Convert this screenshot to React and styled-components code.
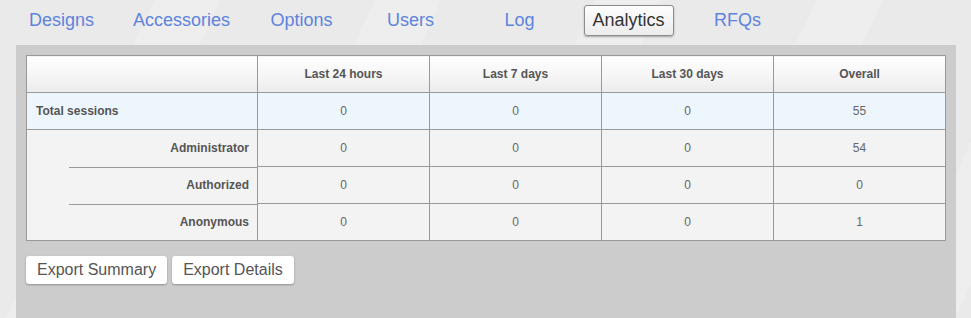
import React from "react";
import styled, { createGlobalStyle } from "styled-components";

const GlobalStyle = createGlobalStyle`
  html, body {
    margin: 0;
    padding: 0;
  }
  body {
    font-family: "Liberation Sans", Arial, sans-serif;
    background: #eaeaea;
    background-image: repeating-linear-gradient(
      115deg,
      rgba(255, 255, 255, 0) 0px,
      rgba(255, 255, 255, 0) 140px,
      rgba(255, 255, 255, 0.18) 140px,
      rgba(255, 255, 255, 0.18) 200px
    );
  }
`;

const tabs = ["Designs", "Accessories", "Options", "Users", "Log", "Analytics", "RFQs"];
const activeTab = "Analytics";

const rows = [
  { label: "Total sessions", values: [0, 0, 0, 55], total: true },
  { label: "Administrator", values: [0, 0, 0, 54] },
  { label: "Authorized", values: [0, 0, 0, 0], indent: true },
  { label: "Anonymous", values: [0, 0, 0, 1], indent: true },
];

const App = () => {
  return (
    <Page>
      <GlobalStyle />
      <Nav>
        {tabs.map((t) => (
          <NavItem key={t} $active={t === activeTab}>
            {t === activeTab ? <ActiveTab>{t}</ActiveTab> : <NavLink href="#">{t}</NavLink>}
          </NavItem>
        ))}
      </Nav>
      <Panel>
        <StatsTable>
          <colgroup>
            <col style={{ width: 231 }} />
            <col />
            <col />
            <col />
            <col />
          </colgroup>
          <thead>
            <tr>
              <HeadCell></HeadCell>
              <HeadCell>Last 24 hours</HeadCell>
              <HeadCell>Last 7 days</HeadCell>
              <HeadCell>Last 30 days</HeadCell>
              <HeadCell>Overall</HeadCell>
            </tr>
          </thead>
          <tbody>
            {rows.map((r) => (
              <Row key={r.label} $total={r.total}>
                <LabelCell $total={r.total} $indent={r.indent}>
                  {r.label}
                </LabelCell>
                {r.values.map((v, i) => (
                  <ValueCell key={i}>{v}</ValueCell>
                ))}
              </Row>
            ))}
          </tbody>
        </StatsTable>
        <Actions>
          <ExportButton>Export Summary</ExportButton>
          <ExportButton>Export Details</ExportButton>
        </Actions>
      </Panel>
    </Page>
  );
};

export default App;

const Page = styled.div`
  min-height: 100vh;
  display: flex;
  flex-direction: column;
`;

const Nav = styled.nav`
  display: flex;
  align-items: center;
  height: 41px;
  padding: 0 0 4px 7px;
`;

const NavItem = styled.div`
  min-width: 109px;
  padding: ${(p) => (p.$active ? "0" : "0 17px")};
  box-sizing: border-box;
  display: flex;
  justify-content: center;
`;

const NavLink = styled.a`
  font-size: 18px;
  color: #5d84dc;
  text-decoration: none;
`;

const ActiveTab = styled.span`
  display: inline-flex;
  align-items: center;
  height: 31px;
  box-sizing: border-box;
  padding: 0 8px;
  font-size: 18px;
  color: #333;
  background: linear-gradient(#fdfdfd, #ececec);
  border: 1px solid #8c8c8c;
  border-radius: 3px;
  box-shadow: 0 1px 2px rgba(0, 0, 0, 0.3);
`;

const Panel = styled.div`
  flex: 1;
  margin: 0 15px 0 16px;
  padding: 10px;
  background: #cccccc;
`;

const StatsTable = styled.table`
  width: 920px;
  border-collapse: collapse;
  table-layout: fixed;
  font-size: 12px;
  color: #555;
`;

const HeadCell = styled.th`
  height: 36px;
  padding: 0;
  border: 1px solid #999;
  background: linear-gradient(#ffffff, #ececec);
  font-weight: bold;
  text-align: center;
`;

const Row = styled.tr`
  background: ${(p) => (p.$total ? "#eef6fd" : "#f3f3f3")};
`;

const LabelCell = styled.td`
  height: 36px;
  padding: ${(p) => (p.$total ? "0 0 0 9px" : "0 8px 0 0")};
  border: 1px solid #999;
  font-weight: bold;
  text-align: ${(p) => (p.$total ? "left" : "right")};
  ${(p) =>
    p.$indent &&
    `
    border-top-style: hidden;
    background: linear-gradient(#999, #999) no-repeat right top / calc(100% - 42px) 1px;
  `}
`;

const ValueCell = styled.td`
  height: 36px;
  padding: 0;
  border: 1px solid #999;
  text-align: center;
  color: #666;
`;

const Actions = styled.div`
  display: flex;
  gap: 5px;
  margin-top: 15px;
`;

const ExportButton = styled.button`
  height: 28px;
  padding: 0 11px;
  font-family: "Liberation Sans", Arial, sans-serif;
  font-size: 16px;
  color: #555;
  background: #fff;
  border: none;
  border-radius: 3px;
  box-shadow: 0 1px 2px rgba(0, 0, 0, 0.3);
  cursor: pointer;
`;
